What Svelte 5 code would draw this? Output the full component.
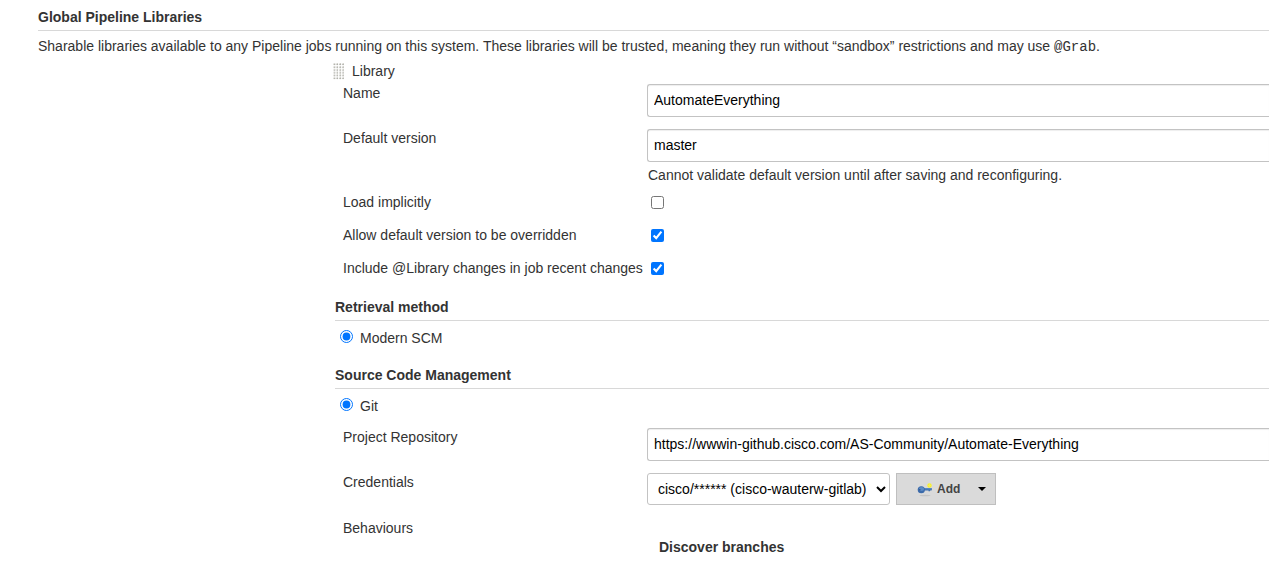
<script>
  let name = $state('AutomateEverything');
  let version = $state('master');
  let implicit = $state(false);
  let override = $state(true);
  let changes = $state(true);
  let retrieval = $state('modern');
  let scm = $state('git');
  let repository = $state('https://wwwin-github.cisco.com/AS-Community/Automate-Everything');

  const dots = Array.from({ length: 24 }, (_, i) => ({ x: (i % 4) * 3, y: Math.floor(i / 4) * 3 }));
</script>

<main>
  <h1>Global Pipeline Libraries</h1>
  <p class="intro">
    Sharable libraries available to any Pipeline jobs running on this system. These libraries will be trusted, meaning they run without “sandbox” restrictions and may use <code>@Grab</code>.
  </p>

  <section class="library">
    <div class="title">
      <svg class="grip" width="12" height="18" viewBox="0 0 12 18" aria-hidden="true">
        {#each dots as d}
          <rect x={d.x} y={d.y + 1} width="2" height="1" fill="#c4c4be" />
          <rect x={d.x + 1} y={d.y + 1} width="1" height="1" fill="#a9a9a2" />
          <rect x={d.x + 1} y={d.y} width="1" height="1" fill="#c4c4be" />
          <rect x={d.x} y={d.y} width="1" height="1" fill="#e6e6e2" />
        {/each}
      </svg>
      <span>Library</span>
    </div>

    <div class="row first">
      <label for="name">Name</label>
      <input id="name" class="text" type="text" bind:value={name} />
    </div>
    <div class="row">
      <label for="version">Default version</label>
      <div>
        <input id="version" class="text" type="text" bind:value={version} />
        <p class="message">Cannot validate default version until after saving and reconfiguring.</p>
      </div>
    </div>
    <div class="row check">
      <label for="implicit">Load implicitly</label>
      <input id="implicit" type="checkbox" bind:checked={implicit} />
    </div>
    <div class="row check">
      <label for="override">Allow default version to be overridden</label>
      <input id="override" type="checkbox" bind:checked={override} />
    </div>
    <div class="row check">
      <label for="changes">Include @Library changes in job recent changes</label>
      <input id="changes" type="checkbox" bind:checked={changes} />
    </div>

    <h2>Retrieval method</h2>
    <label class="choice">
      <input type="radio" name="retrieval" value="modern" bind:group={retrieval} />
      <span>Modern SCM</span>
    </label>

    <h2>Source Code Management</h2>
    <label class="choice">
      <input type="radio" name="scm" value="git" bind:group={scm} />
      <span>Git</span>
    </label>

    <div class="row">
      <label for="repository">Project Repository</label>
      <input id="repository" class="text" type="text" bind:value={repository} />
    </div>
    <div class="row">
      <label for="credentials">Credentials</label>
      <div class="credentials">
        <select id="credentials">
          <option>cisco/****** (cisco-wauterw-gitlab)</option>
        </select>
        <button type="button">
          <svg width="16" height="16" viewBox="0 0 16 16" aria-hidden="true">
            <ellipse cx="8" cy="14.500" rx="5.500" ry="0.800" fill="#c4c4c4" />
            <path d="M6 7h8.500l.5 1-.5 1.500H13v.8h-1.500v-.8H6z" fill="#3f6fae" />
            <path d="M6 7.800h8.500" stroke="#6f9acb" stroke-width=".8" />
            <ellipse cx="4.300" cy="8.700" rx="3.600" ry="3.500" fill="#3b6aaa" />
            <ellipse cx="4.500" cy="8" rx="2.600" ry="2" fill="#5b8ac4" />
            <circle cx="2.800" cy="8.800" r=".8" fill="#2b5288" />
            <circle cx="12.500" cy="4.500" r="2.200" fill="#f7f02c" />
            <path d="M12.500 2v5M10 4.500h5" stroke="#f4ee60" stroke-width=".8" />
          </svg>
          <span>Add</span>
          <svg class="caret" width="8" height="4" viewBox="0 0 8 4" aria-hidden="true">
            <path d="M0 0h8L4 4z" fill="#000" />
          </svg>
        </button>
      </div>
    </div>
    <div class="row behaviours">
      <span>Behaviours</span>
      <h3>Discover branches</h3>
    </div>
  </section>
</main>

<style>
  :global(body) {
    margin: 0;
    background: #fff;
  }
  main {
    padding: 8px 0 16px 38px;
    color: #333;
    font: 14px/18px "Liberation Sans", Arial, Helvetica, sans-serif;
  }
  h1, h2, h3, p {
    margin: 0;
    font-size: 14px;
    line-height: 18px;
  }
  h1, h2 {
    padding-bottom: 4px;
    border-bottom: 1px solid #d8d8d8;
  }
  h2 {
    margin-top: 19px;
  }
  .intro {
    margin-top: 6px;
  }
  code {
    font: 14px/14px "Liberation Mono", "Courier New", monospace;
  }
  .library {
    margin: 7px 0 0 297px;
  }
  .title {
    display: flex;
    gap: 7px;
    margin-left: -2px;
  }
  .grip {
    margin-top: 1px;
    height: 17px;
  }
  .row {
    display: grid;
    grid-template-columns: 304px minmax(0, 1fr);
    align-items: start;
    margin-top: 12px;
    padding-left: 8px;
    white-space: nowrap;
  }
  .first {
    margin-top: 4px;
  }
  .check {
    min-height: 24px;
    margin-top: 9px;
  }
  .check + h2 {
    margin-top: 15px;
  }
  input {
    margin: 0;
  }
  .check input {
    width: 13px;
    height: 13px;
    margin: 3px 4px;
  }
  .text {
    display: block;
    box-sizing: border-box;
    width: 100%;
    height: 33px;
    padding: 0 6px 2px;
    border: 1px solid #c3c3c3;
    border-right: 0;
    border-radius: 3px 0 0 3px;
    background: #fff;
    box-shadow: inset 0 1px 1px #eee;
    color: #000;
    font: inherit;
  }
  .message {
    margin: 4px 0 0 1px;
  }
  .choice {
    display: flex;
    align-items: flex-start;
    gap: 7px;
    margin-top: 8px;
    padding-left: 5px;
  }
  .choice input {
    width: 13px;
    height: 13px;
    margin-top: 1px;
  }
  .choice + .row {
    margin-top: 13px;
  }
  .credentials {
    display: flex;
    gap: 6px;
  }
  select {
    width: 243px;
    height: 32px;
    padding: 0 0 0 6px;
    border: 1px solid #c3c3c3;
    border-radius: 3px;
    background: #fff;
    color: #000;
    font: inherit;
  }
  button {
    display: flex;
    align-items: center;
    width: 100px;
    height: 32px;
    padding: 0 9px 0 20px;
    border: 1px solid #bfbfbf;
    background: #dadada;
    color: #444;
    font: bold 12px/18px "Liberation Sans", Arial, Helvetica, sans-serif;
  }
  button span {
    margin-left: 4px;
  }
  .caret {
    margin-left: auto;
  }
  .behaviours {
    margin-top: 14px;
  }
  h3 {
    padding: 19px 0 0 12px;
  }
</style>
